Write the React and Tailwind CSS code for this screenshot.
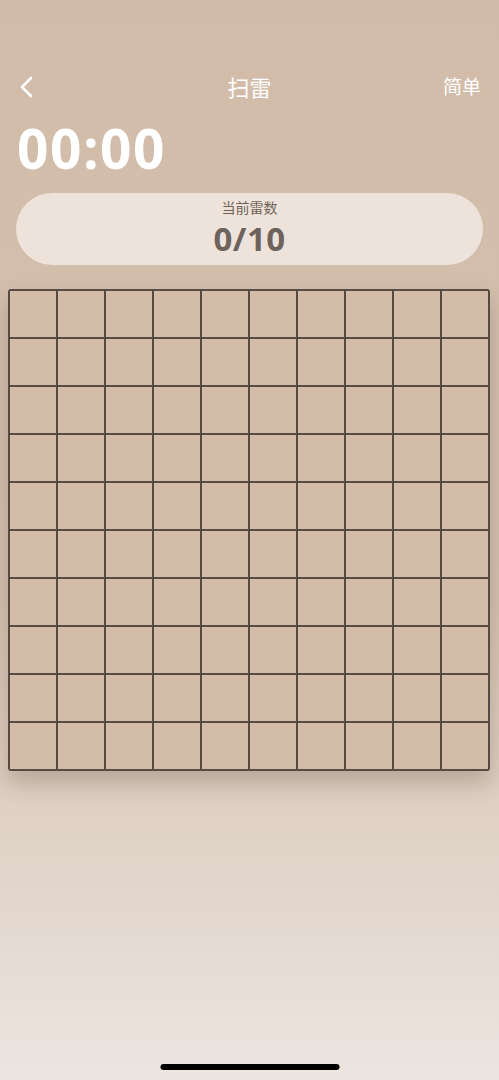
import React from "react";

const cells = Array.from({ length: 100 });

export default function App() {
  return (
    <div
      className="relative flex h-[1080px] w-full flex-col bg-gradient-to-b from-[#d2bca9] via-[#d4c0ae] via-55% to-[#ece5e0]"
      style={{ fontFamily: '"Open Sans", "Noto Sans CJK SC", sans-serif' }}
    >
      {/* header */}
      <div className="mt-[65px] grid h-[44px] grid-cols-[1fr_auto_1fr] items-center px-[18px]">
        <svg width="16" height="22" viewBox="0 0 16 22" fill="none">
          <path d="M13 2 L4 11 L13 20" stroke="white" strokeWidth="2.6" strokeLinecap="round" strokeLinejoin="round" />
        </svg>
        <p className="text-[22px] text-white">扫雷</p>
        <p className="justify-self-end text-[19px] text-white">简单</p>
      </div>

      <p className="ml-[17px] mt-[9px] text-[55px] font-bold leading-[60px] tracking-[1.5px] text-white">00:00</p>

      <div className="mx-[16px] mt-[15px] flex h-[72px] flex-col items-center gap-[3px] rounded-full bg-[#ede3da] pt-[5px]">
        <p className="text-[14px] leading-[20px] text-[#6f6359]">当前雷数</p>
        <p className="text-[33px] font-bold leading-[36px] tracking-[0.5px] text-[#6e635b]">0/10</p>
      </div>

      {/* board */}
      <div className="ml-[8px] mt-[24px] grid w-fit grid-cols-[repeat(10,46px)] gap-[2px] rounded-[3px] bg-[#574a42] p-[2px] shadow-[0_12px_22px_rgba(90,70,50,0.28)]">
        {cells.map((_, i) => (
          <div key={i} className="h-[46px] w-[46px] bg-[#d3bda9]" />
        ))}
      </div>

      <div className="absolute bottom-[10px] left-1/2 h-[6px] w-[179px] -translate-x-1/2 rounded-full bg-black" />
    </div>
  );
}
